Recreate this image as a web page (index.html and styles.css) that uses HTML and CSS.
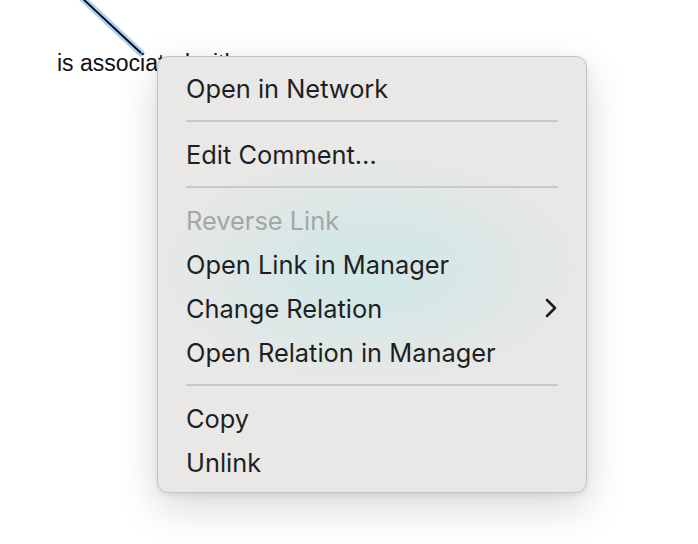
FILE: index.html
```html
<!DOCTYPE html>
<html lang="en">
<head>
<meta charset="utf-8">
<title>Context menu</title>
<link rel="stylesheet" href="styles.css">
</head>
<body>
<div class="canvas">
  <svg class="edge" width="160" height="70" viewBox="0 0 160 70">
    <line x1="82" y1="-2" x2="141" y2="53" stroke="#a9d2f7" stroke-width="7" stroke-linecap="round"/>
    <line x1="82" y1="-2" x2="141" y2="53" stroke="#000" stroke-width="1.8"/>
  </svg>
  <div class="edge-label">is associated with</div>

  <div class="menu">
    <div class="item">Open in Network</div>
    <div class="sep"></div>
    <div class="item">Edit Comment…</div>
    <div class="sep"></div>
    <div class="item disabled">Reverse Link</div>
    <div class="item">Open Link in Manager</div>
    <div class="item has-sub">
      <span>Change Relation</span>
      <svg class="chev" width="12" height="20" viewBox="0 0 12 20"><path d="M2 2 L10 10 L2 18" fill="none" stroke="#1f1f1f" stroke-width="2.6" stroke-linecap="round" stroke-linejoin="round"/></svg>
    </div>
    <div class="item">Open Relation in Manager</div>
    <div class="sep"></div>
    <div class="item">Copy</div>
    <div class="item">Unlink</div>
  </div>
</div>
</body>
</html>
```

FILE: styles.css
```css
html, body {
  margin: 0;
  padding: 0;
  background: #ffffff;
}

.canvas {
  position: relative;
  width: 698px;
  height: 544px;
  overflow: hidden;
  background: #ffffff;
}

.edge {
  position: absolute;
  left: 0;
  top: 0;
}

.edge-label {
  position: absolute;
  left: 57px;
  top: 52px;
  font-family: "Liberation Sans", Arial, sans-serif;
  font-size: 23px;
  line-height: 23px;
  color: #111111;
  white-space: nowrap;
}

.menu {
  position: absolute;
  left: 157px;
  top: 56px;
  width: 430px;
  height: 437px;
  box-sizing: border-box;
  padding: 9px 0 10px;
  display: flex;
  flex-direction: column;
  border-radius: 11px;
  border: 1px solid #c4c4c4;
  background:
    radial-gradient(ellipse 220px 120px at 213px 212px, rgba(210, 231, 231, 1) 0%, rgba(212, 231, 231, 0.85) 40%, rgba(233, 232, 230, 0) 100%),
    #e9e8e6;
  box-shadow: 0 14px 40px rgba(0, 0, 0, 0.16), 0 2px 6px rgba(0, 0, 0, 0.08);
  font-family: Inter, "Noto Sans", sans-serif;
  font-size: 25.4px;
  color: #1f1f1f;
}

.item {
  height: 44px;
  flex: none;
  display: flex;
  align-items: center;
  justify-content: space-between;
  padding: 0 29px 0 28px;
  white-space: nowrap;
}

.item.disabled {
  color: #a6a6a6;
}

.chev {
  display: block;
}

.sep {
  flex: none;
  height: 2px;
  margin: 10px 28px;
  background: #c9c9c9;
}
```
